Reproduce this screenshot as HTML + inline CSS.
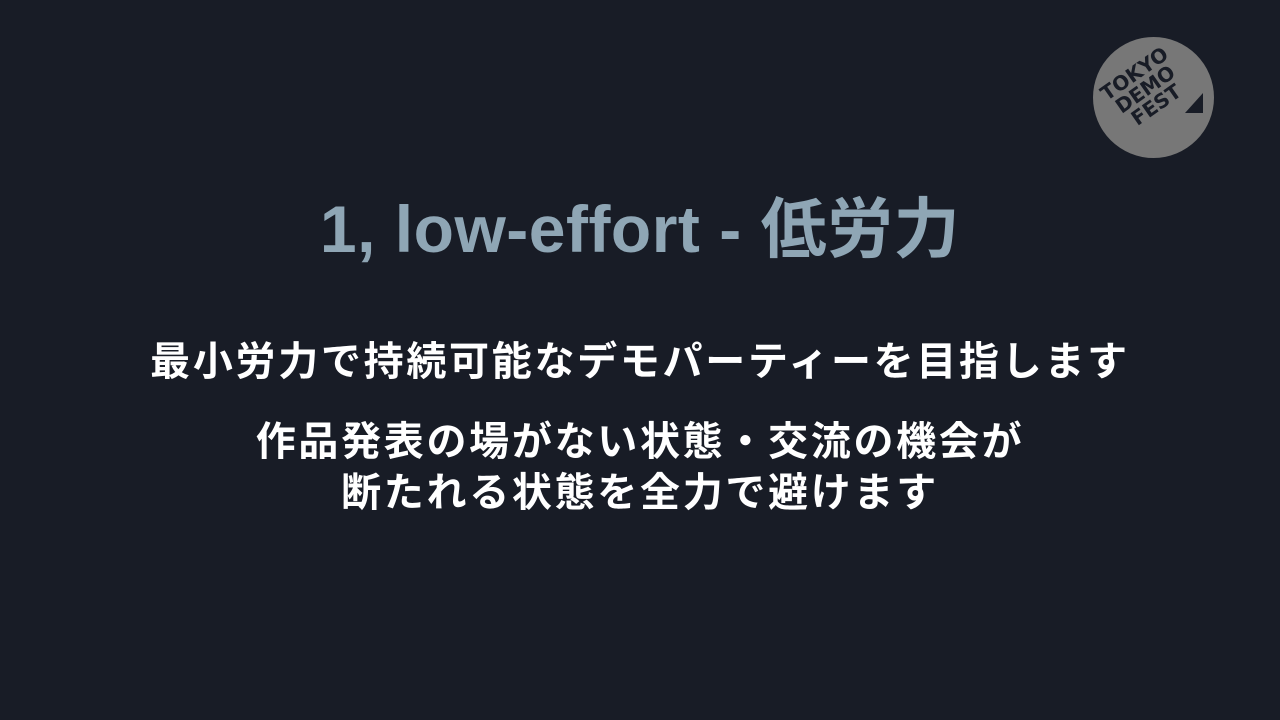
<!DOCTYPE html>
<html><head><meta charset="utf-8"><style>
html,body{margin:0;padding:0}
body{width:1280px;height:720px;background:#181c26;position:relative;overflow:hidden;font-family:"Liberation Sans","Noto Sans CJK JP",sans-serif}
.t{position:absolute;left:0;width:1280px;text-align:center;white-space:nowrap;font-weight:bold}
#title{top:176px;font-size:66px;color:#8fa6b5;letter-spacing:0.5px}
.w{color:#fff;font-size:40px;letter-spacing:2.7px}
#logo{position:absolute;left:1093px;top:37px;width:121px;height:121px;border-radius:50%;background:#777}
#logo .lt{position:absolute;left:14px;top:24px;transform:rotate(-35deg);font-family:"DejaVu Sans",sans-serif;font-weight:900;font-size:20px;line-height:19px;color:#181c26;text-align:center;letter-spacing:0px}
</style></head><body>
<div class="t" id="title">1, low-effort - 低労力</div>
<div class="t w" style="top:329px">最小労力で持続可能なデモパーティーを目指します</div>
<div class="t w" style="top:409px">作品発表の場がない状態・交流の機会が</div>
<div class="t w" style="top:460px">断たれる状態を全力で避けます</div>
<div id="logo"><div class="lt">TOKYO<br>DEMO<br>FEST</div>
<svg style="position:absolute;left:88px;top:56px" width="26" height="26"><polygon points="22,0 22,20 4,20" fill="#181c26"/></svg></div>
</body></html>
